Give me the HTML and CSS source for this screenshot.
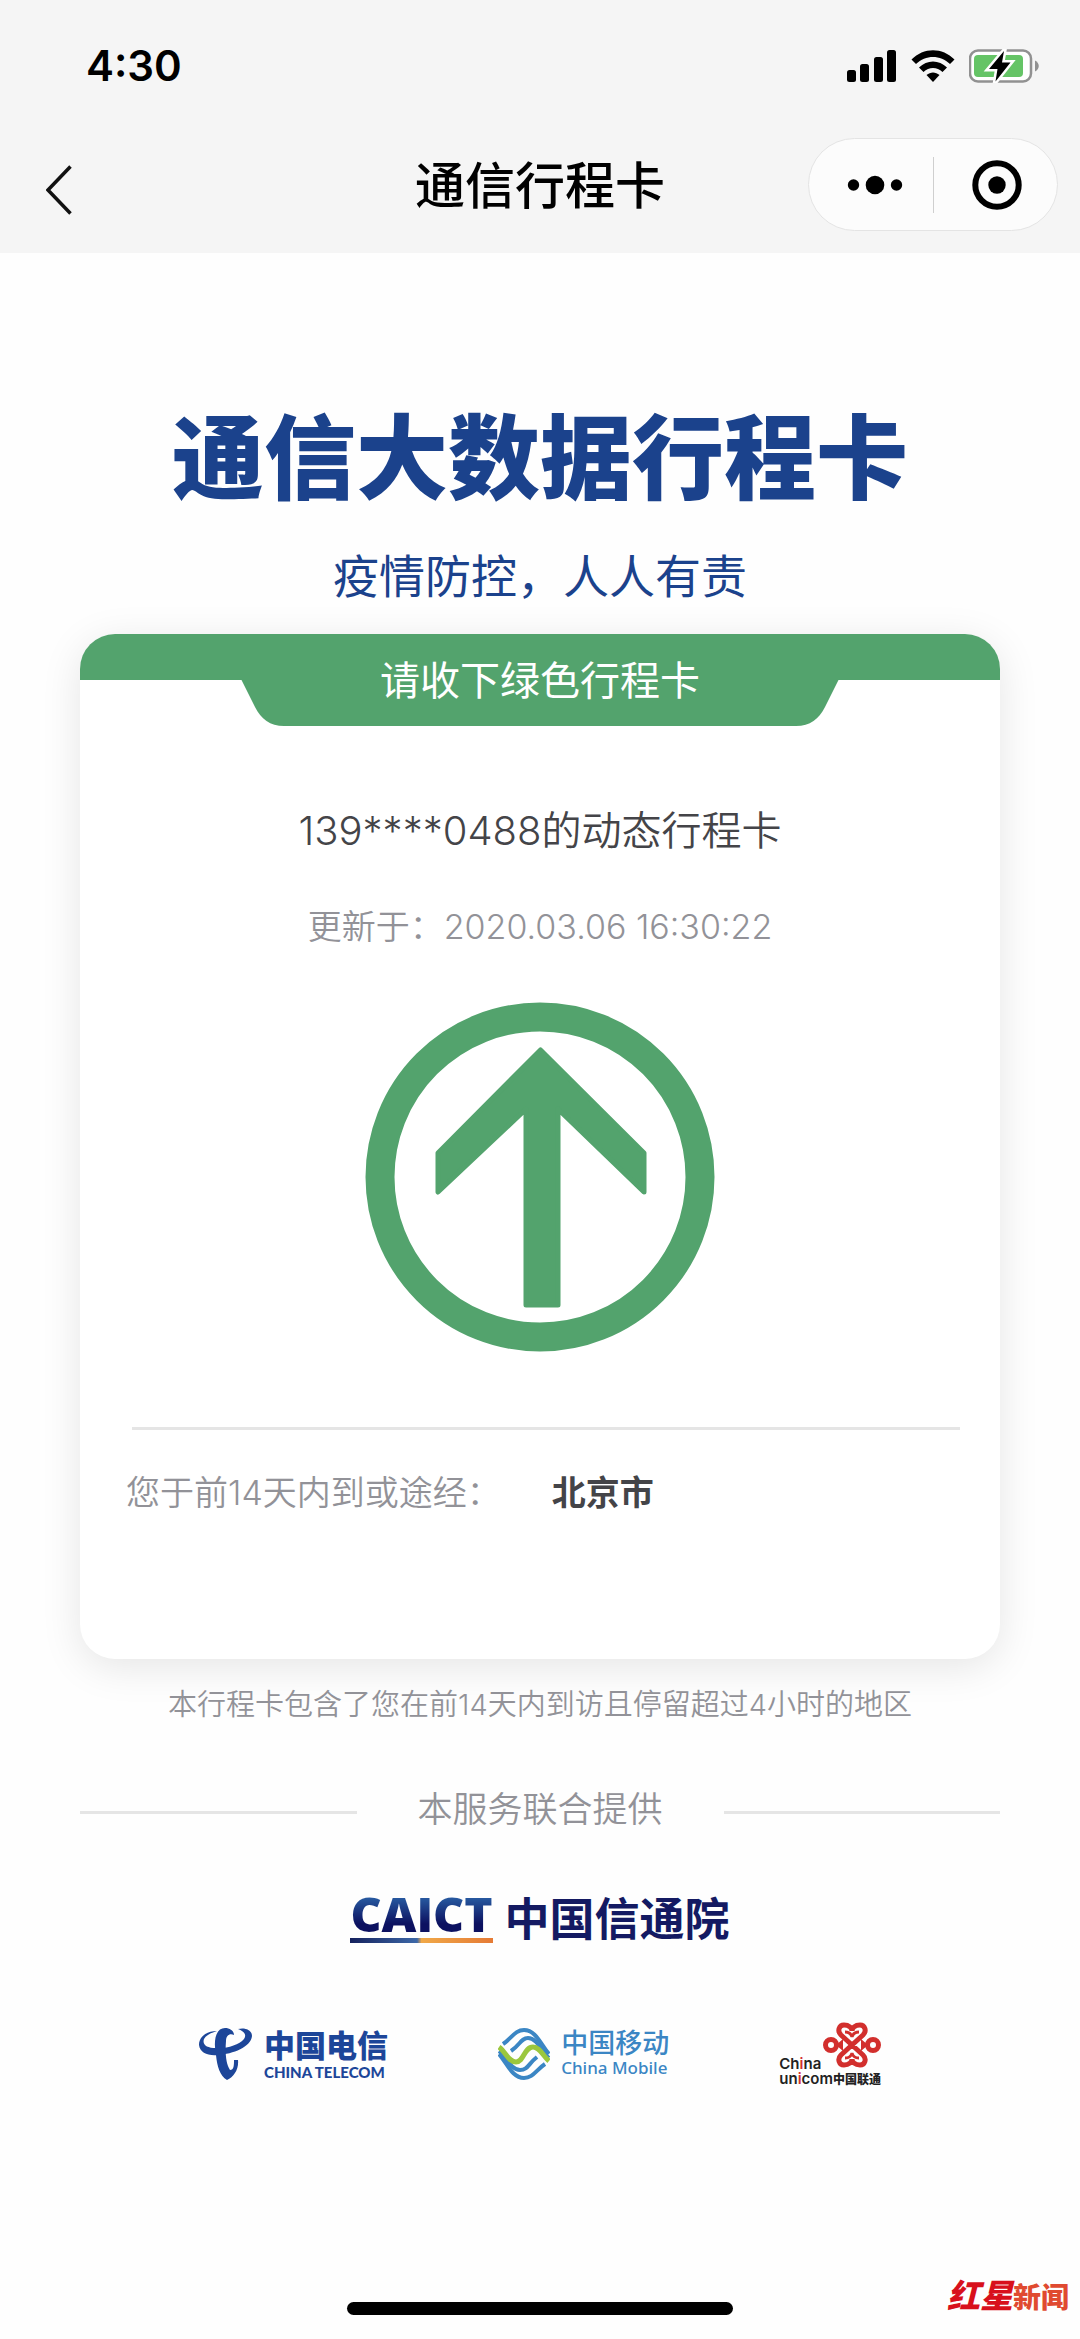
FILE: index.html
```html
<!DOCTYPE html>
<html lang="zh-CN">
<head>
<meta charset="utf-8">
<meta name="viewport" content="width=device-width, initial-scale=1">
<title>通信行程卡</title>
<link rel="stylesheet" href="styles.css">
</head>
<body>
<header class="top">
  <div class="status">
    <time class="clock">4:30</time>
    <div class="status-icons">
      <svg width="50" height="32" viewBox="0 0 50 32" aria-hidden="true">
        <rect x="0" y="20" width="9" height="12" rx="2.5"/><rect x="13" y="14" width="9" height="18" rx="2.5"/><rect x="27" y="7" width="9" height="25" rx="2.5"/><rect x="40" y="0" width="9" height="32" rx="2.5"/>
      </svg>
      <svg width="44" height="32" viewBox="0 0 44 32" aria-hidden="true">
        <path d="M0.5 9.5C12.500-3 31.500-3 43.500 9.500L39 14C29.500 4.500 14.500 4.500 5 14Z"/>
        <path d="M8 17.500C16 9.500 28 9.500 36 17.500L31.500 22C26 16.500 18 16.500 12.500 22Z"/>
        <path d="M15.500 25C19.500 21.500 24.500 21.500 28.500 25L22 32Z"/>
      </svg>
      <svg width="70" height="34" viewBox="0 0 70 34" aria-hidden="true">
        <rect x="1" y="1.500" width="61" height="31" rx="8" fill="#fff" stroke="#919191" stroke-width="2.500"/>
        <rect x="5" y="6" width="49" height="22" rx="4" fill="#65c466"/>
        <path d="M66 11.500C71 14 71 20 66 22.500Z" fill="#919191"/>
        <path d="M35 2L20 20H28.500L26.500 32.500L41.500 13.500H33Z" stroke="#fff" stroke-width="5"/>
        <path d="M35 2L20 20H28.500L26.500 32.500L41.500 13.500H33Z"/>
      </svg>
    </div>
  </div>
  <nav class="nav">
    <button class="back" type="button" aria-label="返回">
      <svg width="26" height="50" viewBox="0 0 26 50" aria-hidden="true"><path d="M24.500 1.500L2 25L24.500 48.500" fill="none" stroke="#111" stroke-width="3.500"/></svg>
    </button>
    <h1 class="nav-title">通信行程卡</h1>
    <div class="capsule">
      <button type="button" aria-label="更多">
        <svg width="56" height="20" viewBox="0 0 56 20" aria-hidden="true"><circle cx="6.500" cy="10" r="5.700"/><circle cx="28" cy="10" r="9.300"/><circle cx="49.500" cy="10" r="5.700"/></svg>
      </button>
      <button type="button" aria-label="关闭">
        <svg width="50" height="50" viewBox="0 0 50 50" aria-hidden="true"><circle cx="25" cy="25" r="21.700" fill="none" stroke="#000" stroke-width="6"/><circle cx="25" cy="25" r="8.700"/></svg>
      </button>
    </div>
  </nav>
</header>

<main class="main">
  <h2 class="headline">通信大数据行程卡</h2>
  <p class="slogan">疫情防控，人人有责</p>

  <section class="card">
    <div class="ribbon">
      <div class="tab">
        <svg class="tab-shape" width="598" height="92" viewBox="0 0 598 92" aria-hidden="true"><path d="M0 45L14 73C20 85 29 92 43 92H555C569 92 578 85 584 73L598 45Z"/></svg>
        <span class="tab-text">请收下绿色行程卡</span>
      </div>
    </div>
    <p class="owner">139****0488的动态行程卡</p>
    <p class="updated">更新于：<time>2020.03.06 16:30:22</time></p>
    <svg class="arrow" width="350" height="350" viewBox="0 0 350 350" role="img" aria-label="绿色">
      <circle cx="175" cy="175" r="160" fill="none" stroke="#53a36d" stroke-width="29"/>
      <path d="M175.500 48L279 151V190L193 107V303H161V107L73 190V151Z" stroke="#53a36d" stroke-width="5" stroke-linejoin="round" fill="#53a36d"/>
    </svg>
    <dl class="visited">
      <dt>您于前14天内到或途经：</dt>
      <dd>北京市</dd>
    </dl>
  </section>

  <p class="note">本行程卡包含了您在前14天内到访且停留超过4小时的地区</p>

  <h3 class="provided">本服务联合提供</h3>

  <div class="caict">
    <span class="caict-mark">CAICT</span>
    <span class="caict-name">中国信通院</span>
  </div>

  <div class="carriers">
    <div class="telecom">
      <svg width="54" height="52" viewBox="0 0 54 52" fill="#1d4699" aria-hidden="true">
        <path d="M18 3C7 3 0 9 0 17C1 25 9 28 19 27C34 26 52 19 53 8C53 2 46-1 39 1C45 3 48 7 45 11C40 17 27 21 17 20C8 20 3 17 5 11C7 7 12 5 18 3Z"/>
        <path d="M17 27C14 12 17 0 26 0C31 0 35 3 35 7C31 5 27 7 27 13C26 25 27 36 31 42C35 42 35 37 35 32H39C40 41 35 49 28 52C21 48 18 38 17 27Z"/>
      </svg>
      <div class="names"><span class="zh">中国电信</span><span class="en">CHINA TELECOM</span></div>
    </div>
    <div class="mobile">
      <svg width="52" height="52" viewBox="0 0 52 52" fill="none" aria-hidden="true">
        <g stroke="#3b86c4" stroke-width="4">
          <path d="M5 16C14 10 17 2 26 2C38 2 43 17 51 26"/>
          <path d="M13 23C22 17 23 10 30 10C39 10 44 24 51 30"/>
          <path d="M47 36C38 42 35 50 26 50C14 50 9 35 1 26"/>
          <path d="M39 29C30 36 30 42 22 42C13 42 8 29 1 23"/>
        </g>
        <path d="M1 19C8 24 10 34 18 34C26 34 26 19 35 19C42 19 45 28 51 33" stroke="#9bc73d" stroke-width="5"/>
      </svg>
      <div class="names"><span class="zh">中国移动</span><span class="en">China Mobile</span></div>
    </div>
    <div class="unicom">
      <svg class="knot" width="58" height="46" viewBox="0 0 58 46" fill="none" stroke="#d22f2d" stroke-width="5" aria-hidden="true">
        <path d="M29 23L18 13C14 9 16 3 21 3C26 3 29 6 29 9C29 6 32 3 37 3C42 3 44 9 40 13L18 33C14 37 16 43 21 43C26 43 29 40 29 37C29 40 32 43 37 43C42 43 44 37 40 33Z"/>
        <path d="M22 10C25 10 28 11 29 15C30 11 33 10 36 10M22 36C25 36 28 35 29 31C30 35 33 36 36 36" stroke-width="3"/>
        <circle cx="8" cy="23" r="5.500"/><circle cx="50" cy="23" r="5.500"/>
        <path d="M13 23L20 17V29ZM45 23L38 17V29Z" fill="#d22f2d" stroke="none"/>
      </svg>
      <div class="unicom-text"><span>Ch<i>i</i>na</span><span>un<i>i</i>com<b>中国联通</b></span></div>
    </div>
  </div>
</main>

<div class="home-bar"></div>
<div class="watermark"><span class="wm-star">红星</span><span class="wm-news">新闻</span></div>
</body>
</html>
```
FILE: styles.css
```css
* { box-sizing: border-box; }

body {
  margin: 0;
  min-height: 100vh;
  position: relative;
  display: flex;
  flex-direction: column;
  background: #fefefe;
  color: #000;
  font-family: Inter, "Noto Sans CJK SC", sans-serif;
}

h1, h2, h3, p, dl, dd { margin: 0; }

button {
  border: 0;
  padding: 0;
  background: none;
  display: flex;
  align-items: center;
  justify-content: center;
}

svg { display: block; flex: none; }

.top { background: #f5f5f5; }

.status {
  height: 116px;
  padding: 16px 41px 0 86px;
  display: flex;
  align-items: center;
  justify-content: space-between;
}

.clock { font-size: 42px; line-height: 52px; font-weight: 600; }

.status-icons { display: flex; align-items: center; gap: 14px; }

.nav {
  height: 137px;
  padding: 0 22px;
  display: grid;
  grid-template-columns: 1fr auto 1fr;
  align-items: center;
}

.back { justify-self: start; padding: 10px 24px 0; }

.nav-title {
  padding-bottom: 6px;
  font-family: "Noto Sans CJK SC", sans-serif;
  font-size: 50px;
  line-height: 60px;
  font-weight: 500;
}

.capsule {
  justify-self: end;
  width: 250px;
  height: 93px;
  display: grid;
  grid-template-columns: 1fr 1fr;
  align-items: center;
  border: 1px solid #e4e4e4;
  border-radius: 47px;
  background: #fcfcfc;
}

.capsule button { height: 56px; padding-left: 8px; }
.capsule button + button { border-left: 1px solid #cfcfcf; padding-left: 2px; }

.main {
  flex: 1;
  padding: 153px 80px 0;
  display: flex;
  flex-direction: column;
}

.headline {
  text-align: center;
  color: #1b428c;
  font-family: "Noto Sans CJK SC", sans-serif;
  font-size: 92px;
  line-height: 92px;
  font-weight: 900;
}

.slogan {
  margin-top: 45px;
  text-align: center;
  color: #1b428c;
  font-family: "Noto Sans CJK SC", sans-serif;
  font-size: 46px;
  line-height: 60px;
}

.card {
  margin-top: 31px;
  height: 1025px;
  border-radius: 35px;
  background: #fff;
  box-shadow: 0 8px 40px rgba(0, 0, 0, 0.1);
  display: flex;
  flex-direction: column;
}

.ribbon {
  height: 92px;
  border-radius: 35px 35px 0 0;
  background: linear-gradient(#53a36d 46px, transparent 46px);
  display: flex;
  justify-content: center;
}

.tab {
  position: relative;
  width: 598px;
  display: flex;
  align-items: center;
  justify-content: center;
}

.tab-shape { position: absolute; inset: 0; fill: #53a36d; }

.tab-text {
  position: relative;
  padding-top: 2px;
  color: #fff;
  font-size: 40px;
  line-height: 48px;
}

.owner {
  margin-top: 81px;
  text-align: center;
  color: #444448;
  font-size: 40px;
  line-height: 48px;
  font-weight: 350;
}

.updated {
  margin-top: 50px;
  text-align: center;
  color: #929298;
  font-size: 34px;
  line-height: 44px;
  font-weight: 350;
}

.arrow { margin: 53px auto 0; }

.visited {
  margin: 75px 40px 0 52px;
  padding-top: 41px;
  border-top: 3px solid #e5e5e5;
  display: flex;
  gap: 51px;
  font-size: 34px;
  line-height: 44px;
}

.visited dt { margin-left: -6px; color: #929298; font-weight: 350; }
.visited dd { color: #444448; font-weight: 600; }

.note {
  margin-top: 26px;
  text-align: center;
  color: #929298;
  font-size: 29px;
  line-height: 40px;
  font-weight: 350;
}

.provided {
  margin-top: 62px;
  display: flex;
  align-items: center;
  gap: 61px;
  color: #929298;
  font-size: 35px;
  line-height: 44px;
  font-weight: 350;
}

.provided::before,
.provided::after {
  content: "";
  flex: 1;
  height: 3px;
  margin-top: 6px;
  background: #e5e5e5;
}

.caict {
  margin-top: 60px;
  display: flex;
  justify-content: center;
  gap: 12px;
}

.caict-mark {
  height: 52px;
  border-bottom: 5px solid;
  border-image: linear-gradient(90deg, #14205c, #3d68a8 47%, #f0a848 50%, #e57a35) 1;
  color: transparent;
  background: linear-gradient(#2e6cb0, #0c1160 70%);
  -webkit-background-clip: text;
  background-clip: text;
  font-family: "Open Sans", sans-serif;
  font-size: 48px;
  line-height: 46px;
  font-weight: 800;
}

.caict-name {
  color: #141a62;
  font-family: "Noto Sans CJK SC", sans-serif;
  font-size: 45px;
  line-height: 52px;
  font-weight: 700;
}

.carriers {
  margin-top: 79px;
  padding: 0 119px;
  display: flex;
  align-items: center;
  justify-content: space-between;
}

.telecom, .mobile { display: flex; align-items: center; gap: 11px; }

.names { display: flex; flex-direction: column; }

.telecom { color: #1d4699; }
.telecom .zh { font-size: 31px; line-height: 36px; font-weight: 900; }
.telecom .en { font-family: Lato, sans-serif; font-size: 15px; line-height: 16px; font-weight: 900; }

.mobile { color: #3b86c4; }
.mobile .zh { font-size: 27px; line-height: 28px; font-weight: 500; }
.mobile .en { font-family: "Noto Sans", sans-serif; font-size: 17px; line-height: 20px; font-weight: 500; }

.unicom { display: flex; flex-direction: column; }
.knot { align-self: flex-end; }

.unicom-text {
  margin-top: -12px;
  display: flex;
  flex-direction: column;
  color: #222;
  font-family: Inter, sans-serif;
  font-size: 15px;
  line-height: 15px;
  font-weight: 600;
}

.unicom-text i { color: #d22f2d; font-style: normal; }
.unicom-text b { font-family: "Noto Sans CJK SC", sans-serif; font-size: 12px; line-height: 12px; font-weight: 900; }

.home-bar {
  width: 386px;
  height: 13px;
  margin: 0 auto 24px;
  border-radius: 7px;
  background: #000;
}

.watermark {
  position: absolute;
  right: 11px;
  bottom: 21px;
  display: flex;
  align-items: flex-end;
  font-family: "Noto Sans CJK SC", sans-serif;
  font-weight: 900;
}

.wm-star { color: #d8101c; font-size: 33px; line-height: 48px; font-style: italic; }
.wm-news { color: #e04a30; font-size: 28px; line-height: 44px; }
```
